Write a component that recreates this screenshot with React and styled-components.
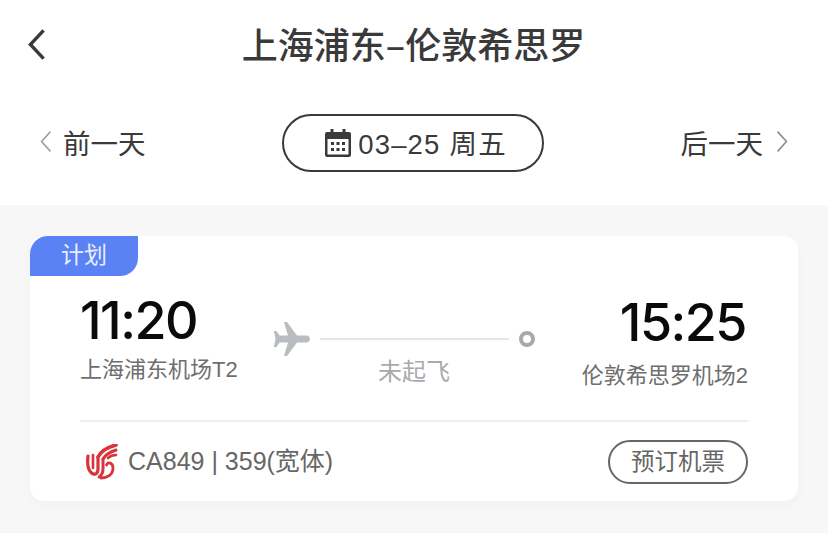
import React from 'react'
import styled, {createGlobalStyle} from 'styled-components'

const GlobalStyle = createGlobalStyle`
    html, body {
        margin: 0;
        padding: 0;
        background: #ffffff;
    }
    body {
        width: 828px;
        height: 533px;
        overflow: hidden;
        font-family: "Liberation Sans", "Noto Sans CJK SC", sans-serif;
    }
`;

const Page = styled.div`
    width: 828px;
    height: 533px;
    display: flex;
    flex-direction: column;
    overflow: hidden;
`;

const Header = styled.header`
    height: 88px;
    padding-left: 27px;
    display: grid;
    grid-template-columns: 20px 1fr 48px;
    align-items: center;
`;
const Title = styled.h1`
    margin: 0;
    padding-bottom: 3px;
    text-align: center;
    font-family: "Noto Sans CJK SC", sans-serif;
    font-size: 36px;
    line-height: 44px;
    font-weight: 500;
    color: #3a3a3a;
`;

const DateBar = styled.div`
    height: 117px;
    padding: 26px 40px 33px 40px;
    box-sizing: border-box;
    display: flex;
    justify-content: space-between;
    align-items: center;
`;
const DayLink = styled.div`
    display: flex;
    align-items: center;
    gap: ${props => props.next ? "13px" : "11px"};
    padding-bottom: 3px;
    font-size: 27.5px;
    color: #3a3a3a;
`;
const DatePill = styled.div`
    width: 262px;
    height: 58px;
    box-sizing: border-box;
    padding-left: 6px;
    border: 2px solid #3a3a3a;
    border-radius: 29px;
    display: flex;
    align-items: center;
    justify-content: center;
    gap: 7px;
    font-size: 27.5px;
    letter-spacing: 1.200px;
    color: #3a3a3a;
`;
const DateText = styled.span`
    padding-bottom: 3px;
`;

const Panel = styled.main`
    flex: 1;
    background: #f7f7f7;
    padding: 31px 30px 0;
`;
const Card = styled.section`
    position: relative;
    height: 265px;
    box-sizing: border-box;
    padding: 53px 50px 0;
    background: #ffffff;
    border-radius: 14px;
    box-shadow: 0 6px 14px rgba(0, 0, 0, 0.025);
`;
const StatusTag = styled.div`
    position: absolute;
    left: 0;
    top: 0;
    width: 108px;
    height: 40px;
    background: #5b82f5;
    border-radius: 18px 0 18px 0;
    color: #e9efff;
    font-size: 23px;
    line-height: 38px;
    text-align: center;
`;

const Route = styled.div`
    height: 133px;
    box-sizing: border-box;
    display: grid;
    grid-template-columns: 193px 1fr 213px;
    border-bottom: 2px solid #eeeeee;
`;
const Stop = styled.div`
    display: flex;
    flex-direction: column;
    align-items: ${props => props.right ? "flex-end" : "flex-start"};
    padding-top: ${props => props.right ? "4px" : "2px"};
`;
const Time = styled.div`
    font-family: Inter, "Liberation Sans", sans-serif;
    font-size: 52px;
    line-height: 60px;
    font-weight: 500;
    letter-spacing: -1.500px;
    color: #0a0a0a;
    margin-right: ${props => props.right ? "2px" : "0"};
`;
const Airport = styled.div`
    margin-top: ${props => props.right ? "8px" : "4px"};
    font-size: 22px;
    line-height: 30px;
    color: #6e6e6e;
`;

const Progress = styled.div`
    display: flex;
    flex-direction: column;
    align-items: center;
    padding-top: 32px;
`;
const Track = styled.div`
    width: 100%;
    height: 36px;
    display: flex;
    align-items: center;
    gap: 10px;
`;
const TrackLine = styled.div`
    flex: 1;
    height: 2px;
    background: #e6e6e6;
`;
const TrackEnd = styled.div`
    width: 16px;
    height: 16px;
    box-sizing: border-box;
    border: 4px solid #a9a9a9;
    border-radius: 50%;
`;
const ProgressLabel = styled.div`
    margin-left: 20px;
    font-size: 24px;
    line-height: 30px;
    color: #aaaaaa;
`;

const Footer = styled.div`
    height: 79px;
    display: flex;
    align-items: center;
    justify-content: space-between;
`;
const FlightInfo = styled.div`
    display: flex;
    align-items: center;
    gap: 10px;
    padding-left: 6px;
    font-size: 25px;
    color: #666666;
`;
const FlightText = styled.span`
    padding-bottom: 5px;
`;
const BookButton = styled.button`
    width: 140px;
    height: 44px;
    padding: 0 0 3px;
    background: transparent;
    border: 2px solid #666666;
    border-radius: 22px;
    font: inherit;
    font-size: 23.5px;
    color: #666666;
`;

const Chevron = ({w, h, color, stroke, direction}) => {
    const m = stroke
    const points = direction === 'right'
        ? `${m} ${m} ${w - m} ${h / 2} ${m} ${h - m}`
        : `${w - m} ${m} ${m} ${h / 2} ${w - m} ${h - m}`
    return (
        <svg width={w} height={h} viewBox={`0 0 ${w} ${h}`} fill="none" stroke={color} strokeWidth={stroke} style={{flexShrink: 0}}>
            <polyline points={points}/>
        </svg>
    )
}

const IcoCalendar = () => (
    <svg width="26" height="28" viewBox="0 0 26 28" style={{flexShrink: 0}}>
        <path fill="#3a3a3a" d="M5.500 0h3v3h9V0h3v3H24a2 2 0 0 1 2 2v21a2 2 0 0 1-2 2H2a2 2 0 0 1-2-2V5a2 2 0 0 1 2-2h3.500z"/>
        <rect x="2.500" y="10" width="21" height="15.500" fill="#ffffff"/>
        <g fill="#3a3a3a">
            <rect x="6" y="13" width="3" height="3"/>
            <rect x="11.500" y="13" width="3" height="3"/>
            <rect x="17" y="13" width="3" height="3"/>
            <rect x="6" y="19" width="3" height="3"/>
            <rect x="11.500" y="19" width="3" height="3"/>
            <rect x="17" y="19" width="3" height="3"/>
        </g>
    </svg>
)

const IcoPlane = () => (
    <svg width="37" height="34" viewBox="0 0 37 34" style={{flexShrink: 0}}>
        <path fill="#b9bcc0" d="M11 0h3l10 13.500h9c2.400 0 4 1.700 4 3.500s-1.600 3.500-4 3.500h-9L14 34h-3l4-13.500H6.500L3.500 25H.8l1.700-8L.8 9h2.700l3 4.500H15z"/>
    </svg>
)

// air china phoenix, drawn from the reference
const AirChinaLogo = () => (
    <svg width="32" height="36" viewBox="0 0 32 36" style={{flexShrink: 0}}>
        <g fill="none" stroke="#d8343c" strokeLinecap="round" strokeLinejoin="round">
            <path strokeWidth="3.200" d="M2 12c-1 8 0 14 3.500 17 3 2.500 6.500 1 6.500-4V13"/>
            <path strokeWidth="2.600" d="M7 11v13"/>
            <path strokeWidth="3.600" d="M12 13C15 7 22 3 30 1"/>
            <path strokeWidth="3" d="M17 15c3-5 7-7 13-9"/>
            <path strokeWidth="2.600" d="M22 14c2-2 5-3 8-3"/>
            <path strokeWidth="3" d="M17 15v10c0 4-1 6-4 8"/>
            <path strokeWidth="2.800" d="M15 34c6 0 12-3 12-10 0-5-5-7-6.500-3"/>
        </g>
    </svg>
)

export default function App() {
    return (
        <Page>
            <GlobalStyle/>
            <Header>
                <Chevron w={20} h={35} color="#3a3a3a" stroke={3.400} direction="left"/>
                <Title>上海浦东–伦敦希思罗</Title>
            </Header>
            <DateBar>
                <DayLink>
                    <Chevron w={12} h={23} color="#a0a0a0" stroke={1.600} direction="left"/>
                    前一天
                </DayLink>
                <DatePill>
                    <IcoCalendar/>
                    <DateText>03–25 周五</DateText>
                </DatePill>
                <DayLink next>
                    后一天
                    <Chevron w={12} h={23} color="#8c8c8c" stroke={1.600} direction="right"/>
                </DayLink>
            </DateBar>
            <Panel>
                <Card>
                    <StatusTag>计划</StatusTag>
                    <Route>
                        <Stop>
                            <Time>11:20</Time>
                            <Airport>上海浦东机场T2</Airport>
                        </Stop>
                        <Progress>
                            <Track>
                                <IcoPlane/>
                                <TrackLine/>
                                <TrackEnd/>
                            </Track>
                            <ProgressLabel>未起飞</ProgressLabel>
                        </Progress>
                        <Stop right>
                            <Time right>15:25</Time>
                            <Airport right>伦敦希思罗机场2</Airport>
                        </Stop>
                    </Route>
                    <Footer>
                        <FlightInfo>
                            <AirChinaLogo/>
                            <FlightText>CA849 | 359(宽体)</FlightText>
                        </FlightInfo>
                        <BookButton>预订机票</BookButton>
                    </Footer>
                </Card>
            </Panel>
        </Page>
    )
}
